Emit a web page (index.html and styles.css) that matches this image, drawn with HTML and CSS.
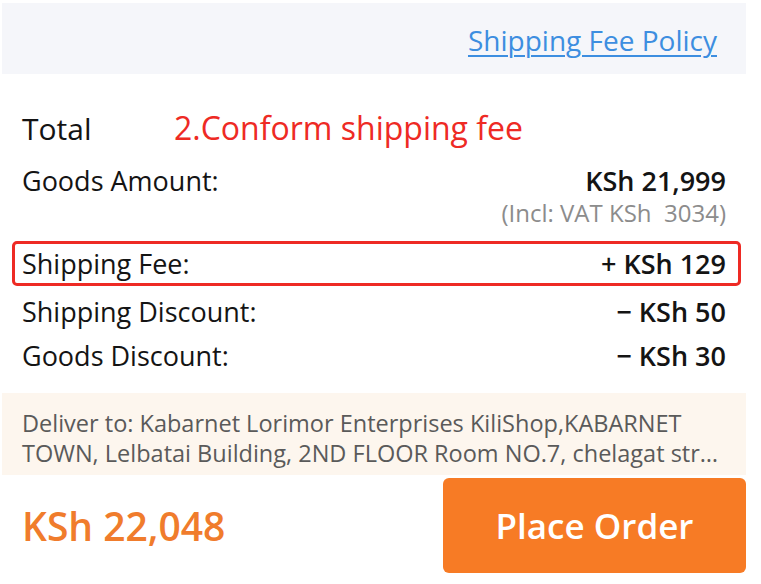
FILE: index.html
```html
<!DOCTYPE html>
<html lang="en">
<head>
<meta charset="utf-8">
<link rel="stylesheet" href="styles.css">
</head>
<body>
<div class="page">
  <div class="policy-bar">
    <a class="policy-link" href="#">Shipping Fee Policy</a>
  </div>
  <div class="summary">
    <div class="total-row">
      <span class="total-title">Total</span>
      <span class="note">2.Conform shipping fee</span>
    </div>
    <div class="row goods">
      <span class="label">Goods Amount:</span>
      <span class="value">KSh 21,999</span>
    </div>
    <div class="vat">(Incl: VAT KSh&nbsp; 3034)</div>
    <div class="row fee-box">
      <span class="label">Shipping Fee:</span>
      <span class="value">+ KSh 129</span>
    </div>
    <div class="row discount">
      <span class="label">Shipping Discount:</span>
      <span class="value">&minus; KSh 50</span>
    </div>
    <div class="row discount">
      <span class="label">Goods Discount:</span>
      <span class="value">&minus; KSh 30</span>
    </div>
  </div>
  <div class="deliver">Deliver to: Kabarnet Lorimor Enterprises KiliShop,KABARNET TOWN, Lelbatai Building, 2ND FLOOR Room NO.7, chelagat str…</div>
  <div class="footer">
    <span class="grand">KSh 22,048</span>
    <button class="order-btn">Place Order</button>
  </div>
</div>
</body>
</html>
```
FILE: styles.css
```css
html, body {
  margin: 0;
  padding: 0;
  background: #ffffff;
}
body {
  font-family: "Open Sans", "Noto Sans", sans-serif;
  color: #141414;
}
.page {
  margin-left: 2px;
  width: 744px;
  padding-top: 3px;
}
.policy-bar {
  height: 71px;
  background: #f5f6fa;
  display: flex;
  align-items: center;
  justify-content: flex-end;
  padding-right: 29px;
  box-sizing: border-box;
}
.policy-link {
  font-size: 28px;
  color: #3d8ee0;
  text-decoration: underline;
  text-underline-offset: 4px;
  text-decoration-thickness: 1.5px;
  padding-top: 3px;
}
.summary {
  padding: 0 20px 0 10px;
}
.total-row {
  margin-top: 33px;
  height: 40px;
  display: flex;
  align-items: center;
  padding-left: 10px;
}
.total-title {
  font-size: 30px;
  width: 152px;
  padding-top: 3px;
}
.note {
  font-size: 32px;
  color: #ee2a24;
}
.row {
  display: flex;
  justify-content: space-between;
  align-items: center;
  font-size: 27px;
  padding: 0 0 0 10px;
}
.value {
  font-weight: 600;
}
.goods {
  margin-top: 15px;
  height: 36px;
}
.vat {
  height: 30px;
  line-height: 30px;
  text-align: right;
  font-size: 24px;
  color: #8c8c8c;
}
.fee-box {
  margin-top: 13px;
  height: 45px;
  border: 3px solid #ee2a24;
  border-radius: 5px;
  box-sizing: border-box;
  padding: 0 12px 0 7px;
  margin-right: -15px;
}
.discount {
  height: 44px;
}
.fee-box + .discount {
  margin-top: 3px;
}
.deliver {
  margin-top: 16px;
  height: 82px;
  box-sizing: border-box;
  padding: 15px 20px 7px 20px;
  background: #fdf6ee;
  color: #5a5a5a;
  font-size: 23.5px;
  line-height: 30px;
  overflow: hidden;
}
.footer {
  margin-top: 3px;
  height: 95px;
  display: flex;
  align-items: center;
  justify-content: space-between;
}
.grand {
  padding-left: 20px;
  font-size: 39px;
  font-weight: 600;
  color: #f07c2c;
}
.order-btn {
  width: 303px;
  height: 95px;
  border: none;
  border-radius: 6px;
  background: #f77b25;
  color: #ffffff;
  font-family: "Open Sans", "Noto Sans", sans-serif;
  font-size: 35px;
  font-weight: 600;
  cursor: pointer;
}
```
